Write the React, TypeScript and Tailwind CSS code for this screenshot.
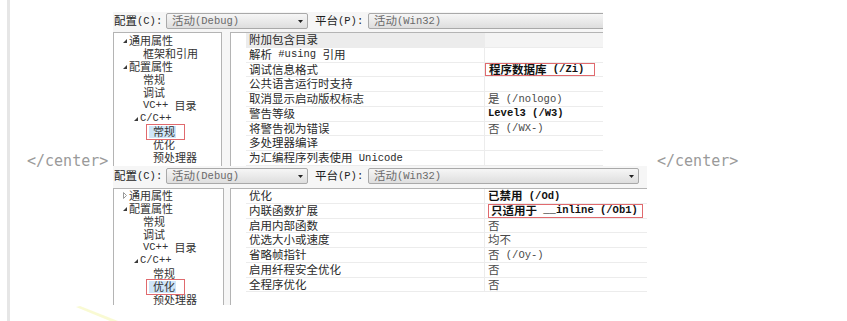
import React from "react";

const CJK = /[\u2E80-\u9FFF\uFF00-\uFFEF\u3000-\u303F]/;
const SPLIT = /[\u2E80-\u9FFF\uFF00-\uFFEF\u3000-\u303F]+|[^\u2E80-\u9FFF\uFF00-\uFFEF\u3000-\u303F]+/g;

function Txt({ s, small }: { s: string; small?: boolean }) {
  const parts = s.match(SPLIT) || [];
  return (
    <>
      {parts.map((p, i) =>
        CJK.test(p) ? (
          <span
            key={i}
            className={`font-['Noto_Sans_CJK_SC',sans-serif] leading-none ${small ? "text-[11px]" : "text-[11.5px]"}`}
          >
            {p}
          </span>
        ) : (
          <span key={i} className="font-['Liberation_Mono',monospace] text-[10.5px] leading-none whitespace-pre">
            {p}
          </span>
        )
      )}
    </>
  );
}

function Arrow() {
  return (
    <svg width="5" height="3" viewBox="0 0 5 3" className="shrink-0">
      <polygon points="0,0 5,0 2.5,3" fill="#222" />
    </svg>
  );
}

function Dropdown({ text, w, arrow }: { text: string; w: string; arrow: boolean }) {
  return (
    <div
      className={`${w} h-[16px] shrink-0 flex items-center justify-between pl-[5px] pr-[4px] border border-[#a9a9a9] rounded-[2px] bg-gradient-to-b from-[#f6f6f6] to-[#dedede] text-[#6a6a6a]`}
    >
      <span className="flex items-center">
        <Txt s={text} />
      </span>
      {arrow && <Arrow />}
    </div>
  );
}

function Toolbar({ h, pt, w1, w2, arrow2 }: { h: string; pt: string; w1: string; w2: string; arrow2: boolean }) {
  return (
    <div className={`${h} ${pt} flex items-start bg-[#f6f6f6] text-[#1e1e1e]`}>
      <span className="w-[53px] pl-[1px] h-[16px] flex items-center shrink-0">
        <Txt s="配置(C):" />
      </span>
      <Dropdown text="活动(Debug)" w={w1} arrow={true} />
      <span className="ml-[7px] w-[53px] h-[16px] flex items-center shrink-0">
        <Txt s="平台(P):" />
      </span>
      <Dropdown text="活动(Win32)" w={w2} arrow={arrow2} />
    </div>
  );
}

type TNode = { label: string; pl: string; exp?: "open" | "closed"; sel?: boolean };

function Expander({ kind }: { kind: "open" | "closed" }) {
  return (
    <span className="w-[6px] h-[13px] flex items-center shrink-0">
      {kind === "open" ? (
        <svg width="4" height="4" viewBox="0 0 4 4">
          <polygon points="4,0 4,4 0,4" fill="#3a3a3a" />
        </svg>
      ) : (
        <svg width="4" height="7" viewBox="0 0 4 7">
          <polygon points="0.5,0.5 3.5,3.5 0.5,6.5" fill="none" stroke="#9a9a9a" strokeWidth="1" />
        </svg>
      )}
    </span>
  );
}

function Tree({ nodes, cls }: { nodes: TNode[]; cls: string }) {
  return (
    <div className={`${cls} shrink-0 bg-white border border-[#b4b4b4] border-b-0 text-[#333] overflow-hidden`}>
      {nodes.map((n, i) => (
        <div key={i} className={`h-[13px] flex items-center ${n.pl}`}>
          {n.exp && <Expander kind={n.exp} />}
          {n.sel ? (
            <span className="relative flex items-center h-[12px]">
              <span className="absolute top-0 bottom-0 left-[-4px] right-[-1px] bg-[#cfe6f8]" />
              <span className="relative flex items-center">
                <Txt s={n.label} small />
              </span>
              <span className="absolute top-[-2px] bottom-[-2px] left-[-7px] right-[-10px] border border-[#e06a6e]" />
            </span>
          ) : (
            <span className="flex items-center">
              <Txt s={n.label} small />
            </span>
          )}
        </div>
      ))}
    </div>
  );
}

type GRow = { name: string; value?: string; bold?: boolean; hl?: boolean; box?: string };

function Grid({ rows, cls }: { rows: GRow[]; cls: string }) {
  return (
    <div className={`${cls} bg-white border-l border-t border-[#b4b4b4] pl-[15px] overflow-hidden`}>
      {rows.map((r, i) => (
        <div key={i} className="flex h-[14.75px] border-b border-[#ececec]">
          <div className={`w-[238px] shrink-0 pl-[3px] flex items-center text-[#2a2a2a] ${r.hl ? "bg-[#ececec]" : ""}`}>
            <Txt s={r.name} />
          </div>
          <div
            className={`flex-1 border-l border-[#ececec] flex items-stretch ${r.hl ? "bg-[#f4f4f4]" : ""} ${
              r.bold ? "font-bold text-[#111]" : "text-[#4a4a4a]"
            }`}
          >
            {r.value && (
              <span className={`flex items-center ${r.box ?? "pl-[3px]"}`}>
                <Txt s={r.value} />
              </span>
            )}
          </div>
        </div>
      ))}
    </div>
  );
}

const tree1: TNode[] = [
  { label: "通用属性", pl: "pl-[9px]", exp: "open" },
  { label: "框架和引用", pl: "pl-[29px]" },
  { label: "配置属性", pl: "pl-[9px]", exp: "open" },
  { label: "常规", pl: "pl-[29px]" },
  { label: "调试", pl: "pl-[29px]" },
  { label: "VC++ 目录", pl: "pl-[29px]" },
  { label: "C/C++", pl: "pl-[20px]", exp: "open" },
  { label: "常规", pl: "pl-[39px]", sel: true },
  { label: "优化", pl: "pl-[39px]" },
  { label: "预处理器", pl: "pl-[39px]" },
];

const tree2: TNode[] = [
  { label: "通用属性", pl: "pl-[9px]", exp: "closed" },
  { label: "配置属性", pl: "pl-[9px]", exp: "open" },
  { label: "常规", pl: "pl-[29px]" },
  { label: "调试", pl: "pl-[29px]" },
  { label: "VC++ 目录", pl: "pl-[29px]" },
  { label: "C/C++", pl: "pl-[20px]", exp: "open" },
  { label: "常规", pl: "pl-[39px]" },
  { label: "优化", pl: "pl-[39px]", sel: true },
  { label: "预处理器", pl: "pl-[39px]" },
];

const grid1: GRow[] = [
  { name: "附加包含目录", hl: true },
  { name: "解析 #using 引用" },
  { name: "调试信息格式", value: "程序数据库 (/Zi)", bold: true, box: "border border-[#e06a6e] pl-[3px] pr-[10px]" },
  { name: "公共语言运行时支持" },
  { name: "取消显示启动版权标志", value: "是 (/nologo)" },
  { name: "警告等级", value: "Level3 (/W3)", bold: true },
  { name: "将警告视为错误", value: "否 (/WX-)" },
  { name: "多处理器编译" },
  { name: "为汇编程序列表使用 Unicode" },
];

const grid2: GRow[] = [
  { name: "优化", value: "已禁用 (/Od)", bold: true },
  { name: "内联函数扩展", value: "只适用于 __inline (/Ob1)", bold: true, box: "border border-[#e06a6e] ml-[3px] pl-[2px] pr-[4px]" },
  { name: "启用内部函数", value: "否" },
  { name: "优选大小或速度", value: "均不" },
  { name: "省略帧指针", value: "否 (/Oy-)" },
  { name: "启用纤程安全优化", value: "否" },
  { name: "全程序优化", value: "否" },
];

export default function App() {
  return (
    <div className="relative w-[847px] h-[321px] bg-white overflow-hidden flex">
      <div className="ml-[7px] w-[3px] self-stretch bg-[#e6e6e6] shrink-0" />
      <div className="w-[103px] shrink-0 pl-[17px] pt-[148px]">
        <span className="font-['DejaVu_Sans_Mono',monospace] text-[15px] leading-[18px] text-[#9a9a9a] whitespace-pre">
          {"</center>"}
        </span>
      </div>
      <div className="pt-[12px] flex flex-col shrink-0">
        {/* screenshot 1 */}
        <div className="w-[490px] h-[154px] flex flex-col bg-[#f6f6f6] overflow-hidden">
          <Toolbar h="h-[20px]" pt="pt-[1px]" w1="w-[142px]" w2="w-[260px]" arrow2={false} />
          <div className="flex flex-1 gap-[8px] overflow-hidden">
            <Tree nodes={tree1} cls="w-[109px] pt-[1px]" />
            <Grid rows={grid1} cls="w-[400px] shrink-0" />
          </div>
        </div>
        {/* screenshot 2 */}
        <div className="w-[534px] h-[139px] flex flex-col bg-[#f6f6f6] overflow-hidden">
          <Toolbar h="h-[22px]" pt="pt-[2px]" w1="w-[142px]" w2="w-[271px]" arrow2={true} />
          <div className="flex flex-1 gap-[6px] overflow-hidden">
            <Tree nodes={tree2} cls="w-[111px]" />
            <Grid rows={grid2} cls="flex-1" />
          </div>
        </div>
      </div>
      <div className="pl-[10px] pt-[148px]">
        <span className="font-['DejaVu_Sans_Mono',monospace] text-[15px] leading-[18px] text-[#9a9a9a] whitespace-pre">
          {"</center>"}
        </span>
      </div>
      <svg className="absolute left-[70px] top-[300px]" width="60" height="21" viewBox="0 0 60 21">
        <polygon points="6,7 10,6 48,21 40,21" fill="#f7f9c8" opacity="0.8" />
      </svg>
    </div>
  );
}
